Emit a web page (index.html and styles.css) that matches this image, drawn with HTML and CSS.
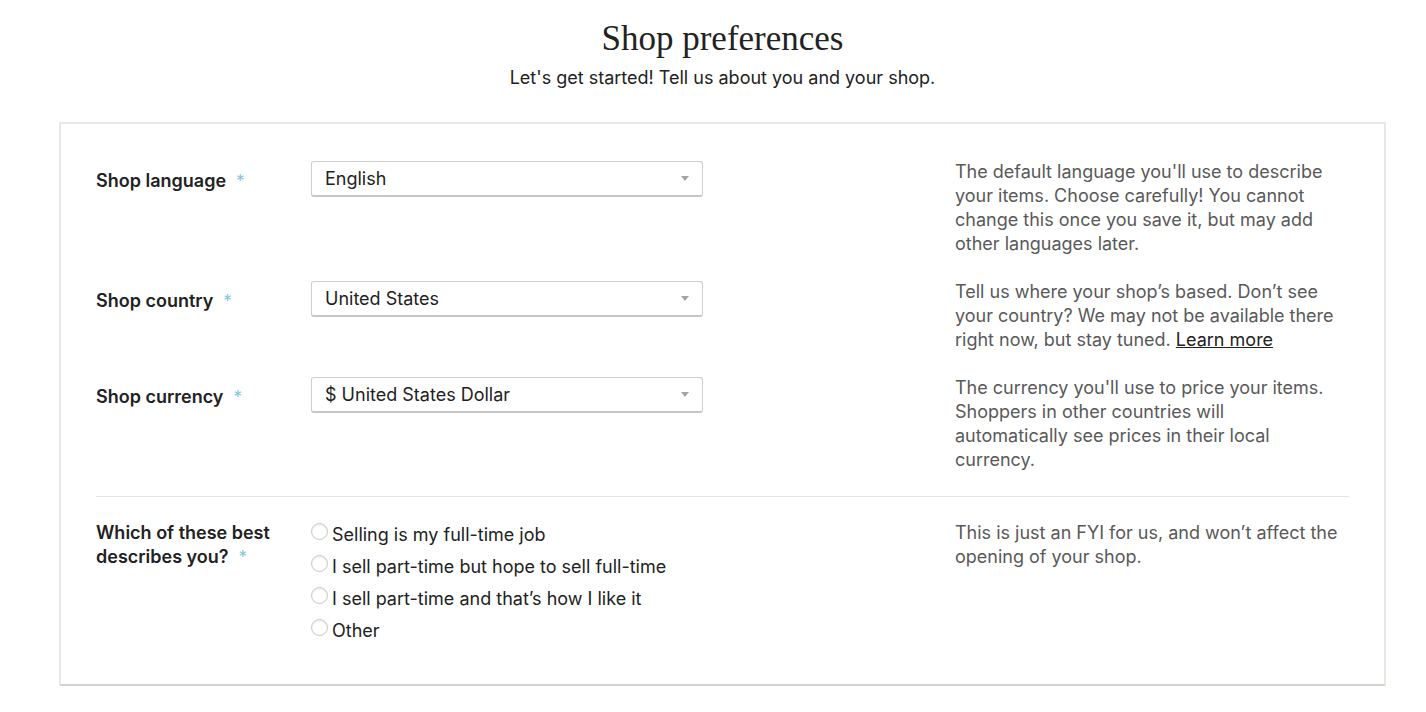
FILE: index.html
```html
<!DOCTYPE html>
<html lang="en">
<head>
<meta charset="utf-8">
<title>Shop preferences</title>
<link rel="stylesheet" href="styles.css">
</head>
<body>
<div class="page">
  <header class="intro">
    <h1 class="title">Shop preferences</h1>
    <p class="subtitle">Let's get started! Tell us about you and your shop.</p>
  </header>

  <section class="card">
    <div class="row">
      <div class="label label-select">Shop language<span class="req">*</span></div>
      <div class="field">
        <div class="select"><span>English</span><span class="caret"></span></div>
      </div>
      <p class="help">The default language you'll use to describe your items. Choose carefully! You cannot change this once you save it, but may add other languages later.</p>
    </div>

    <div class="row">
      <div class="label label-select">Shop country<span class="req">*</span></div>
      <div class="field">
        <div class="select"><span>United States</span><span class="caret"></span></div>
      </div>
      <p class="help">Tell us where your shop’s based. Don’t see your country? We may not be available there right now, but stay tuned. <a class="link" href="#">Learn more</a></p>
    </div>

    <div class="row">
      <div class="label label-select">Shop currency<span class="req">*</span></div>
      <div class="field">
        <div class="select"><span>$ United States Dollar</span><span class="caret"></span></div>
      </div>
      <p class="help">The currency you'll use to price your items. Shoppers in other countries will automatically see prices in their local currency.</p>
    </div>

    <hr class="divider">

    <div class="row row-radio">
      <div class="label">Which of these best describes you?<span class="req">*</span></div>
      <div class="field radios">
        <label class="option"><span class="radio"></span>Selling is my full-time job</label>
        <label class="option"><span class="radio"></span>I sell part-time but hope to sell full-time</label>
        <label class="option"><span class="radio"></span>I sell part-time and that’s how I like it</label>
        <label class="option"><span class="radio"></span>Other</label>
      </div>
      <p class="help">This is just an FYI for us, and won’t affect the opening of your shop.</p>
    </div>
  </section>
</div>
</body>
</html>
```

FILE: styles.css
```css
* { box-sizing: border-box; }

html, body {
  margin: 0;
  padding: 0;
  background: #fff;
}

body {
  font-family: Inter, "Open Sans", "Liberation Sans", sans-serif;
  color: #222;
}

.page {
  width: 1327px;
  margin-left: 59px;
}

.intro {
  text-align: center;
  padding-top: 19px;
}

.title {
  margin: 0;
  font-family: "Liberation Serif", "DejaVu Serif", serif;
  font-weight: 400;
  font-size: 35px;
  line-height: 40px;
  color: #222;
}

.subtitle {
  margin: 7px 0 0;
  font-size: 18px;
  line-height: 24px;
  color: #222;
}

.card {
  margin-top: 32px;
  border: 2px solid #e8e8e3;
  border-bottom-color: #d2d2cf;
  border-radius: 2px;
  padding: 36px 35px 38px;
}

.row {
  display: grid;
  grid-template-columns: 215px 392px 1fr;
  align-items: start;
}

.row + .row {
  margin-top: 24px;
}

.label {
  font-size: 18px;
  font-weight: 600;
  line-height: 24px;
  color: #222;
}

.label-select {
  padding-top: 9px;
}

.req {
  color: #7fc6dc;
  font-weight: 400;
  margin-left: 10px;
  font-size: 17px;
}

.help {
  grid-column: 3;
  width: 384px;
  margin: 0 0 0 252px;
  font-size: 18px;
  line-height: 24px;
  color: #595959;
}

.link {
  color: #222;
  text-decoration: underline;
}

.select {
  margin-top: 1px;
  height: 36px;
  border: 1px solid #cfcfcf;
  border-bottom: 2px solid #c6c6c6;
  border-radius: 3px;
  display: flex;
  align-items: center;
  justify-content: space-between;
  padding: 0 13px 0 13px;
  font-size: 18px;
  color: #222;
  background: #fff;
}

.caret {
  width: 0;
  height: 0;
  border-left: 4px solid transparent;
  border-right: 4px solid transparent;
  border-top: 5px solid #a5a5a5;
}

.divider {
  border: 0;
  border-top: 1px solid #e3e3df;
  margin: 24px 0;
}

.radios {
  display: flex;
  flex-direction: column;
  margin-top: -3px;
}

.option {
  display: flex;
  align-items: center;
  height: 32px;
  font-size: 18px;
  color: #222;
}

.radio {
  width: 17px;
  height: 17px;
  border: 1px solid #c8c8c8;
  border-radius: 50%;
  margin: -6px 4px 0 0;
  box-shadow: inset 0 1px 2px rgba(0,0,0,0.1);
  flex: none;
}
```
